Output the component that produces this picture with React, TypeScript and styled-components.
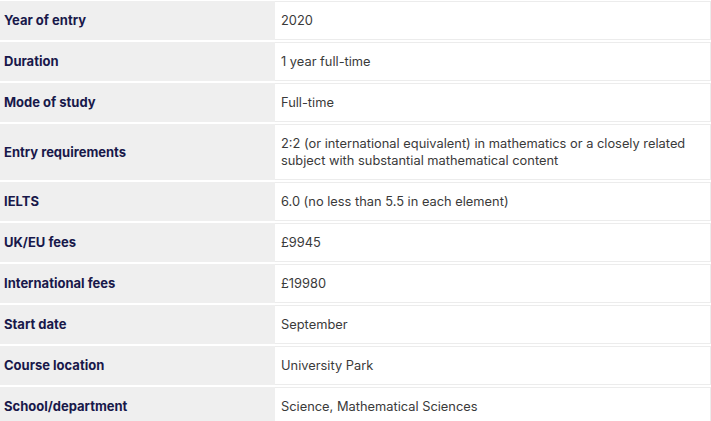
import React from "react";
import styled, { createGlobalStyle } from "styled-components";

const Global = createGlobalStyle`
  html, body { margin: 0; padding: 0; background: #ffffff; }
  body { font-family: Inter, "Liberation Sans", Arial, sans-serif; }
`;

const Table = styled.div`
  width: 711px;
  padding-top: 1px;
  display: flex;
  flex-direction: column;
  gap: 2px;
`;

const Row = styled.div`
  display: grid;
  grid-template-columns: 275px 1fr;
`;

const Label = styled.div`
  background: #efefef;
  color: #18184a;
  font-weight: 700;
  font-size: 13px;
  line-height: 17px;
  padding: 11px 4px;
  display: flex;
  align-items: center;
`;

const Value = styled.div`
  background: #ffffff;
  border: 1px solid #ececec;
  border-left: none;
  color: #3a3a3a;
  font-size: 12.85px;
  line-height: 17px;
  padding: 10px 6px;
  display: flex;
  align-items: center;
`;

const rows: [string, string][] = [
  ["Year of entry", "2020"],
  ["Duration", "1 year full-time"],
  ["Mode of study", "Full-time"],
  [
    "Entry requirements",
    "2:2 (or international equivalent) in mathematics or a closely related subject with substantial mathematical content",
  ],
  ["IELTS", "6.0 (no less than 5.5 in each element)"],
  ["UK/EU fees", "£9945"],
  ["International fees", "£19980"],
  ["Start date", "September"],
  ["Course location", "University Park"],
  ["School/department", "Science, Mathematical Sciences"],
];

export default function App() {
  return (
    <>
      <Global />
      <Table>
        {rows.map(([k, v]) => (
          <Row key={k}>
            <Label>{k}</Label>
            <Value>{v}</Value>
          </Row>
        ))}
      </Table>
    </>
  );
}
